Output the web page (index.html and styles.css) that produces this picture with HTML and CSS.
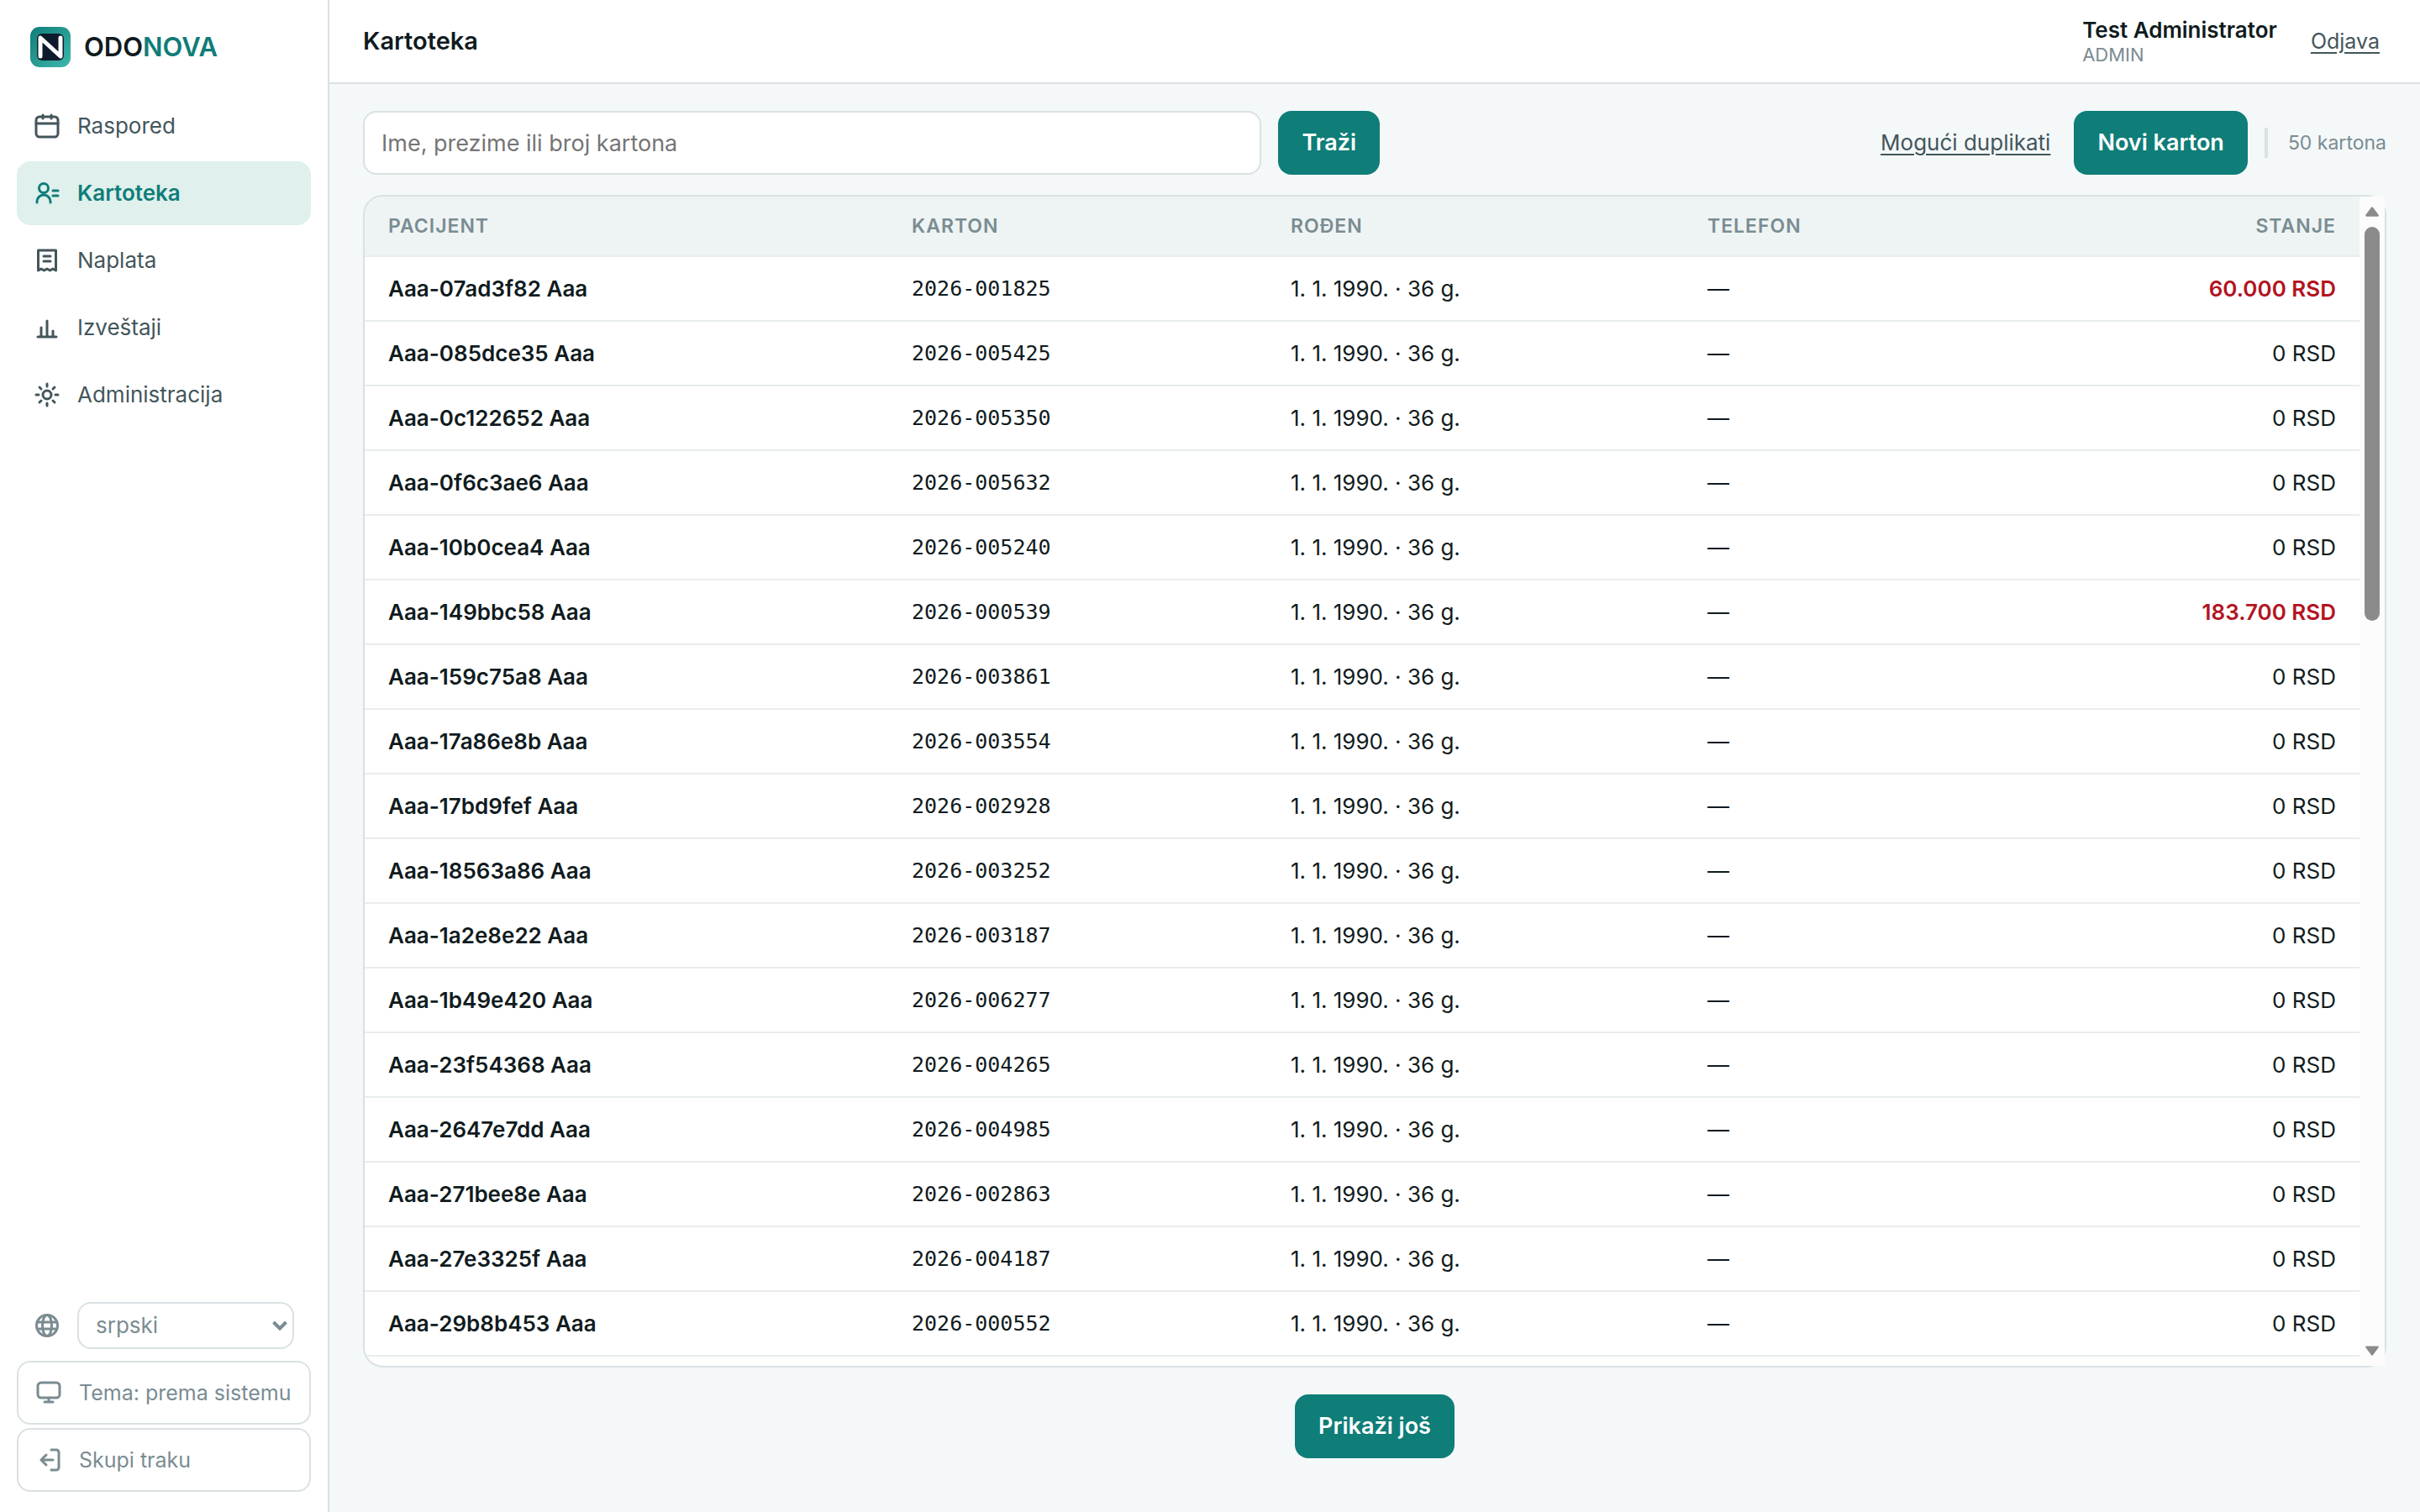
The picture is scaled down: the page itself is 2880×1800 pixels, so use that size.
FILE: index.html
```html
<!DOCTYPE html>
<html lang="sr-Latn">
<head>
    <meta charset="utf-8">
    <title>Odonova - Kartoteka</title>
    <link rel="stylesheet" href="styles.css">
</head>
<body>
    <aside class="sidebar">
        <a class="brand" href="#">
            <svg class="logo" viewBox="0 0 48 48">
                <defs>
                    <linearGradient id="teal" x1="0" y1="0" x2="1" y2="1">
                        <stop offset="0" stop-color="#0f7d78"/>
                        <stop offset="1" stop-color="#3fb8ac"/>
                    </linearGradient>
                </defs>
                <rect width="48" height="48" rx="11" fill="url(#teal)"/>
                <rect x="8" y="8" width="32" height="32" rx="6" fill="#0f1b2d"/>
                <path d="M12 35V13L36 35V13" fill="none" stroke="#fff" stroke-width="5" stroke-linecap="round" stroke-linejoin="round"/>
            </svg>
            <span>ODO<span class="brand-nova">NOVA</span></span>
        </a>

        <nav class="menu">
            <a class="menu-item" href="#">
                <svg class="icon" viewBox="0 0 32 32"><rect x="3" y="5" width="26" height="24" rx="4"/><path d="M3 13h26M11 3v4M21 3v4"/></svg>
                Raspored
            </a>
            <a class="menu-item active" href="#">
                <svg class="icon" viewBox="0 0 32 32"><circle cx="12" cy="10" r="5.5"/><path d="M4 27v-1a8 8 0 0 1 16 0v1M23 13h6M23 19h6"/></svg>
                Kartoteka
            </a>
            <a class="menu-item" href="#">
                <svg class="icon" viewBox="0 0 32 32"><path d="M5.5 28V4h21v24l-3.5-2-3.5 2-3.5-2-3.5 2-3.5-2zM12 11h8M12 17h8"/></svg>
                Naplata
            </a>
            <a class="menu-item" href="#">
                <svg class="icon" viewBox="0 0 32 32"><path d="M5 27h22M9 27V16M16 27V8M23 27v-7"/></svg>
                Izveštaji
            </a>
            <a class="menu-item" href="#">
                <svg class="icon" viewBox="0 0 32 32"><circle cx="16" cy="16" r="5"/><path d="M16 3v3M16 26v3M3 16h3M26 16h3M7 7l2 2M23 23l2 2M7 25l2-2M23 9l2-2"/></svg>
                Administracija
            </a>
        </nav>

        <div class="tools">
            <div class="lang">
                <svg class="icon" viewBox="0 0 32 32"><circle cx="16" cy="16" r="12.5"/><ellipse cx="16" cy="16" rx="5.5" ry="12.5"/><path d="M4.5 12h23M4.5 20h23"/></svg>
                <div class="lang-box">
                    <select class="lang-select" aria-label="Jezik">
                        <option>srpski</option>
                    </select>
                    <svg class="lang-arrow" viewBox="0 0 18 12"><path d="M1.5 2l7.5 7.5L16.5 2"/></svg>
                </div>
            </div>
            <button class="tool" type="button">
                <svg class="icon" viewBox="0 0 32 32"><rect x="3" y="4" width="26" height="18" rx="4"/><path d="M16 22v5M11 27h10"/></svg>
                Tema: prema sistemu
            </button>
            <button class="tool" type="button">
                <svg class="icon" viewBox="0 0 32 32"><path d="M19 4h6a3 3 0 0 1 3 3v18a3 3 0 0 1-3 3h-6M21 16H7M13 10l-6 6 6 6"/></svg>
                Skupi traku
            </button>
        </div>
    </aside>

    <div class="page">
        <header class="topbar">
            <h1>Kartoteka</h1>
            <div class="user">
                <div class="user-name">Test Administrator</div>
                <div class="user-role">ADMIN</div>
            </div>
            <a class="link" href="#">Odjava</a>
        </header>

        <main class="content">
            <div class="toolbar">
                <form class="search">
                    <input class="search-input" type="text" placeholder="Ime, prezime ili broj kartona" aria-label="Ime, prezime ili broj kartona">
                    <button class="btn" type="button">Traži</button>
                </form>
                <a class="link" href="#">Mogući duplikati</a>
                <button class="btn" type="button">Novi karton</button>
                <span class="count">50 kartona</span>
            </div>

            <div class="list">
                <div class="list-view">
                    <table>
                        <thead>
                            <tr>
                                <th class="col-name">Pacijent</th>
                                <th class="col-card">Karton</th>
                                <th class="col-born">Rođen</th>
                                <th class="col-phone">Telefon</th>
                                <th class="col-balance">Stanje</th>
                            </tr>
                        </thead>
                        <tbody id="rows"></tbody>
                    </table>
                </div>
                <div class="scroll">
                    <svg class="scroll-arrow" viewBox="0 0 16 12"><path d="M8 2l6 8H2z"/></svg>
                    <div class="scroll-track"><div class="scroll-thumb"></div></div>
                    <svg class="scroll-arrow" viewBox="0 0 16 12"><path d="M8 10l6-8H2z"/></svg>
                </div>
            </div>

            <button class="btn more" type="button">Prikaži još</button>
        </main>
    </div>

    <script src="script.js"></script>
</body>
</html>
```
FILE: styles.css
```css
*, ::after, ::before {
    box-sizing: border-box;
    margin: 0;
    padding: 0;
}

body {
    display: flex;
    height: 100vh;
    overflow: hidden;
    background: #f4f8f9;
    color: #101b20;
    font-family: Inter, "Liberation Sans", sans-serif;
    font-size: 26px;
    line-height: 36px;
}

button, input, select {
    font: inherit;
    color: inherit;
}

/* sidebar */
.sidebar {
    display: flex;
    flex-direction: column;
    width: 392px;
    flex-shrink: 0;
    padding: 32px 20px 24px;
    background: #fff;
    border-right: 2px solid #d9e1e3;
}

.brand {
    display: flex;
    align-items: center;
    gap: 16px;
    padding-left: 16px;
    margin-bottom: 32px;
    color: #101b20;
    font-size: 31px;
    font-weight: 600;
    line-height: 48px;
    text-decoration: none;
}

.brand-nova {
    color: #0f7d78;
}

.logo {
    width: 48px;
    height: 48px;
}

.menu {
    display: flex;
    flex-direction: column;
    gap: 4px;
}

.menu-item {
    display: flex;
    align-items: center;
    gap: 20px;
    height: 76px;
    padding: 0 20px;
    border-radius: 16px;
    color: #43565b;
    text-decoration: none;
}

.menu-item.active {
    background: #dff0ed;
    color: #0f7d78;
    font-weight: 600;
}

.icon {
    width: 32px;
    height: 32px;
    flex-shrink: 0;
    fill: none;
    stroke: currentColor;
    stroke-width: 3;
    stroke-linecap: round;
    stroke-linejoin: round;
}

.tools {
    display: flex;
    flex-direction: column;
    gap: 4px;
    margin-top: auto;
    color: #7a8c92;
}

.lang {
    display: flex;
    align-items: center;
    gap: 20px;
    padding: 0 20px;
    margin-bottom: 10px;
}

.lang-box {
    position: relative;
    flex: 1;
}

.lang-select {
    width: 100%;
    height: 56px;
    padding: 0 20px;
    appearance: none;
    background: #fff;
    border: 2px solid #d9e1e3;
    border-radius: 16px;
}

.lang-arrow {
    position: absolute;
    right: 8px;
    top: 22px;
    width: 18px;
    height: 12px;
    fill: none;
    stroke: currentColor;
    stroke-width: 4;
    pointer-events: none;
}

.tool {
    display: flex;
    align-items: center;
    gap: 20px;
    height: 76px;
    padding: 0 20px;
    background: #fff;
    border: 2px solid #d9e1e3;
    border-radius: 16px;
    font-size: 25px;
    white-space: nowrap;
}

/* main part */
.page {
    display: flex;
    flex-direction: column;
    flex: 1;
    min-width: 0;
}

.topbar {
    display: flex;
    align-items: center;
    gap: 40px;
    height: 100px;
    padding: 0 48px 0 40px;
    background: #fff;
    border-bottom: 2px solid #d9e1e3;
}

h1 {
    flex: 1;
    font-size: 29px;
    font-weight: 600;
}

.user-name {
    font-weight: 600;
    line-height: 32px;
}

.user-role {
    color: #7a8c92;
    font-size: 22px;
    line-height: 26px;
}

.link {
    color: #43565b;
    text-underline-offset: 4px;
}

.topbar .link {
    font-size: 25px;
}

.content {
    display: flex;
    flex-direction: column;
    flex: 1;
    min-height: 0;
    padding: 32px 40px 64px;
}

.toolbar {
    display: flex;
    align-items: center;
    gap: 28px;
    margin-bottom: 24px;
}

.search {
    display: flex;
    gap: 20px;
    width: 1210px;
    margin-right: auto;
}

.search-input {
    flex: 1;
    min-width: 0;
    height: 76px;
    padding: 0 20px;
    background: #fff;
    border: 2px solid #d9e1e3;
    border-radius: 16px;
    font-size: 27px;
}

.search-input::placeholder {
    color: #757575;
}

.btn {
    height: 76px;
    padding: 0 28px;
    background: #0f7d78;
    border: none;
    border-radius: 16px;
    color: #fff;
    font-size: 27px;
    font-weight: 600;
    white-space: nowrap;
}

.count {
    display: flex;
    align-items: center;
    gap: 24px;
    color: #7a8c92;
    font-size: 23px;
}

.count::before {
    content: "";
    width: 4px;
    height: 36px;
    background: #d9e1e3;
}

.toolbar .count {
    margin-left: -8px;
}

/* list of patients */
.list {
    display: flex;
    flex: 1;
    min-height: 0;
    background: #fff;
    border: 2px solid #d9e1e3;
    border-radius: 24px;
}

.list-view {
    flex: 1;
    overflow: hidden;
    border-radius: 22px 0 0 22px;
}

table {
    width: 100%;
    table-layout: fixed;
    border-collapse: separate;
    border-spacing: 0;
}

th, td {
    padding: 0 28px;
    border-bottom: 2px solid #e8edee;
    text-align: left;
    white-space: nowrap;
}

th {
    height: 72px;
    background: #eef4f4;
    color: #7a8c92;
    font-size: 23px;
    font-weight: 600;
    text-transform: uppercase;
    letter-spacing: 1px;
}

td {
    height: 77px;
}

.col-name { width: 623px; }
.col-card { width: 451px; }
.col-born { width: 496px; }
.col-phone { width: 400px; }

.name {
    font-weight: 600;
}

.card {
    font-family: "DejaVu Sans Mono", "Liberation Mono", monospace;
    font-size: 25px;
}

.col-balance, .balance {
    text-align: right;
}

.debt {
    color: #b3141f;
    font-weight: 600;
}

.scroll {
    display: flex;
    flex-direction: column;
    align-items: center;
    width: 30px;
    padding: 10px 0;
    background: #fcfcfc;
}

.scroll-arrow {
    width: 18px;
    height: 16px;
    fill: #8b8b8b;
    stroke: #8b8b8b;
    stroke-width: 2;
    stroke-linejoin: round;
}

.scroll-track {
    flex: 1;
    width: 18px;
    padding: 10px 0;
}

.scroll-thumb {
    height: 35.5%;
    background: #8b8b8b;
    border-radius: 9px;
}

.more {
    align-self: center;
    flex-shrink: 0;
    margin-top: 32px;
}
```
FILE: script.js
```js
let patients = [
    ["07ad3f82", "001825", "60.000"],
    ["085dce35", "005425", "0"],
    ["0c122652", "005350", "0"],
    ["0f6c3ae6", "005632", "0"],
    ["10b0cea4", "005240", "0"],
    ["149bbc58", "000539", "183.700"],
    ["159c75a8", "003861", "0"],
    ["17a86e8b", "003554", "0"],
    ["17bd9fef", "002928", "0"],
    ["18563a86", "003252", "0"],
    ["1a2e8e22", "003187", "0"],
    ["1b49e420", "006277", "0"],
    ["23f54368", "004265", "0"],
    ["2647e7dd", "004985", "0"],
    ["271bee8e", "002863", "0"],
    ["27e3325f", "004187", "0"],
    ["29b8b453", "000552", "0"]
];

let rows = document.getElementById("rows");

// one table row for each patient, balance over 0 is shown as debt
patients.forEach(function(p) {
    let row = document.createElement("tr");
    let debt = p[2] !== "0" ? " debt" : "";
    row.innerHTML =
        '<td class="name">Aaa-' + p[0] + ' Aaa</td>' +
        '<td class="card">2026-' + p[1] + '</td>' +
        '<td>1. 1. 1990. · 36 g.</td>' +
        '<td>—</td>' +
        '<td class="balance' + debt + '">' + p[2] + ' RSD</td>';
    rows.appendChild(row);
});
```
